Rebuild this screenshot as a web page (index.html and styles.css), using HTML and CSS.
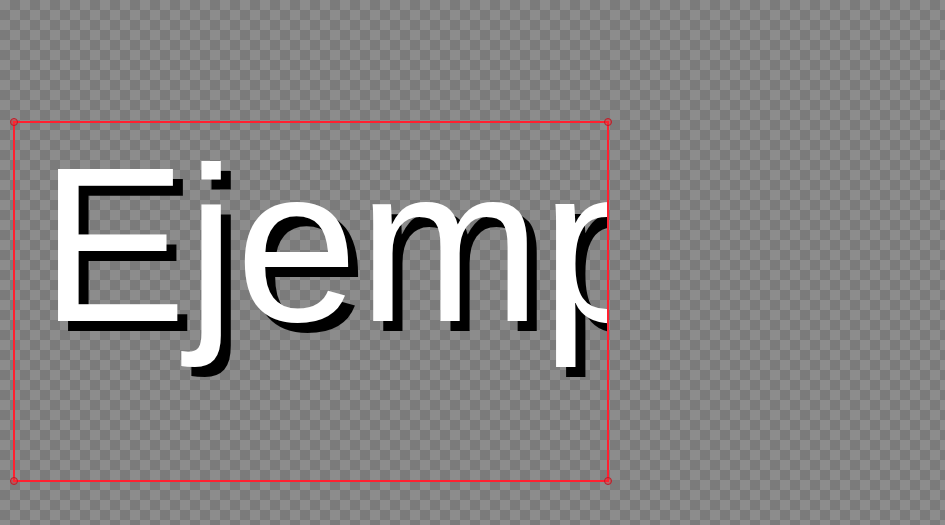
FILE: index.html
```html
<!DOCTYPE html>
<html lang="es">
<head>
<meta charset="utf-8">
<title>Ejemplo</title>
<link rel="stylesheet" href="styles.css">
</head>
<body>
<div class="stage">
  <div class="selection">
    <div class="frame">
      <div class="label">Ejemplo</div>
    </div>
    <span class="handle tl"></span>
    <span class="handle tr"></span>
    <span class="handle bl"></span>
    <span class="handle br"></span>
  </div>
</div>
</body>
</html>
```
FILE: styles.css
```css
html, body {
  margin: 0;
  padding: 0;
}
.stage {
  width: 945px;
  height: 525px;
  box-sizing: border-box;
  padding: 121px 0 0 13px;
  overflow: hidden;
  background-color: #7b7b7b;
  background-image: conic-gradient(#7b7b7b 25%, #8c8c8c 0 50%, #7b7b7b 0 75%, #8c8c8c 0);
  background-size: 20px 20px;
}
.selection {
  position: relative;
  width: 596px;
  height: 361px;
}
.frame {
  width: 100%;
  height: 100%;
  box-sizing: border-box;
  border: 2px solid #ff2030;
  overflow: hidden;
}
.label {
  padding-left: 25px;
  font-family: "Liberation Sans", Arial, sans-serif;
  font-size: 220px;
  line-height: 244px;
  color: #ffffff;
  white-space: nowrap;
  text-shadow: 10px 10px 0 #000000;
}
.handle {
  position: absolute;
  width: 8px;
  height: 8px;
  box-sizing: border-box;
  border-radius: 50%;
  border: 1px solid #c01a26;
  background: rgba(255, 40, 50, 0.4);
}
.tl { left: -3px; top: -3px; }
.tr { right: -3px; top: -3px; }
.bl { left: -3px; bottom: -3px; }
.br { right: -3px; bottom: -3px; }
```
